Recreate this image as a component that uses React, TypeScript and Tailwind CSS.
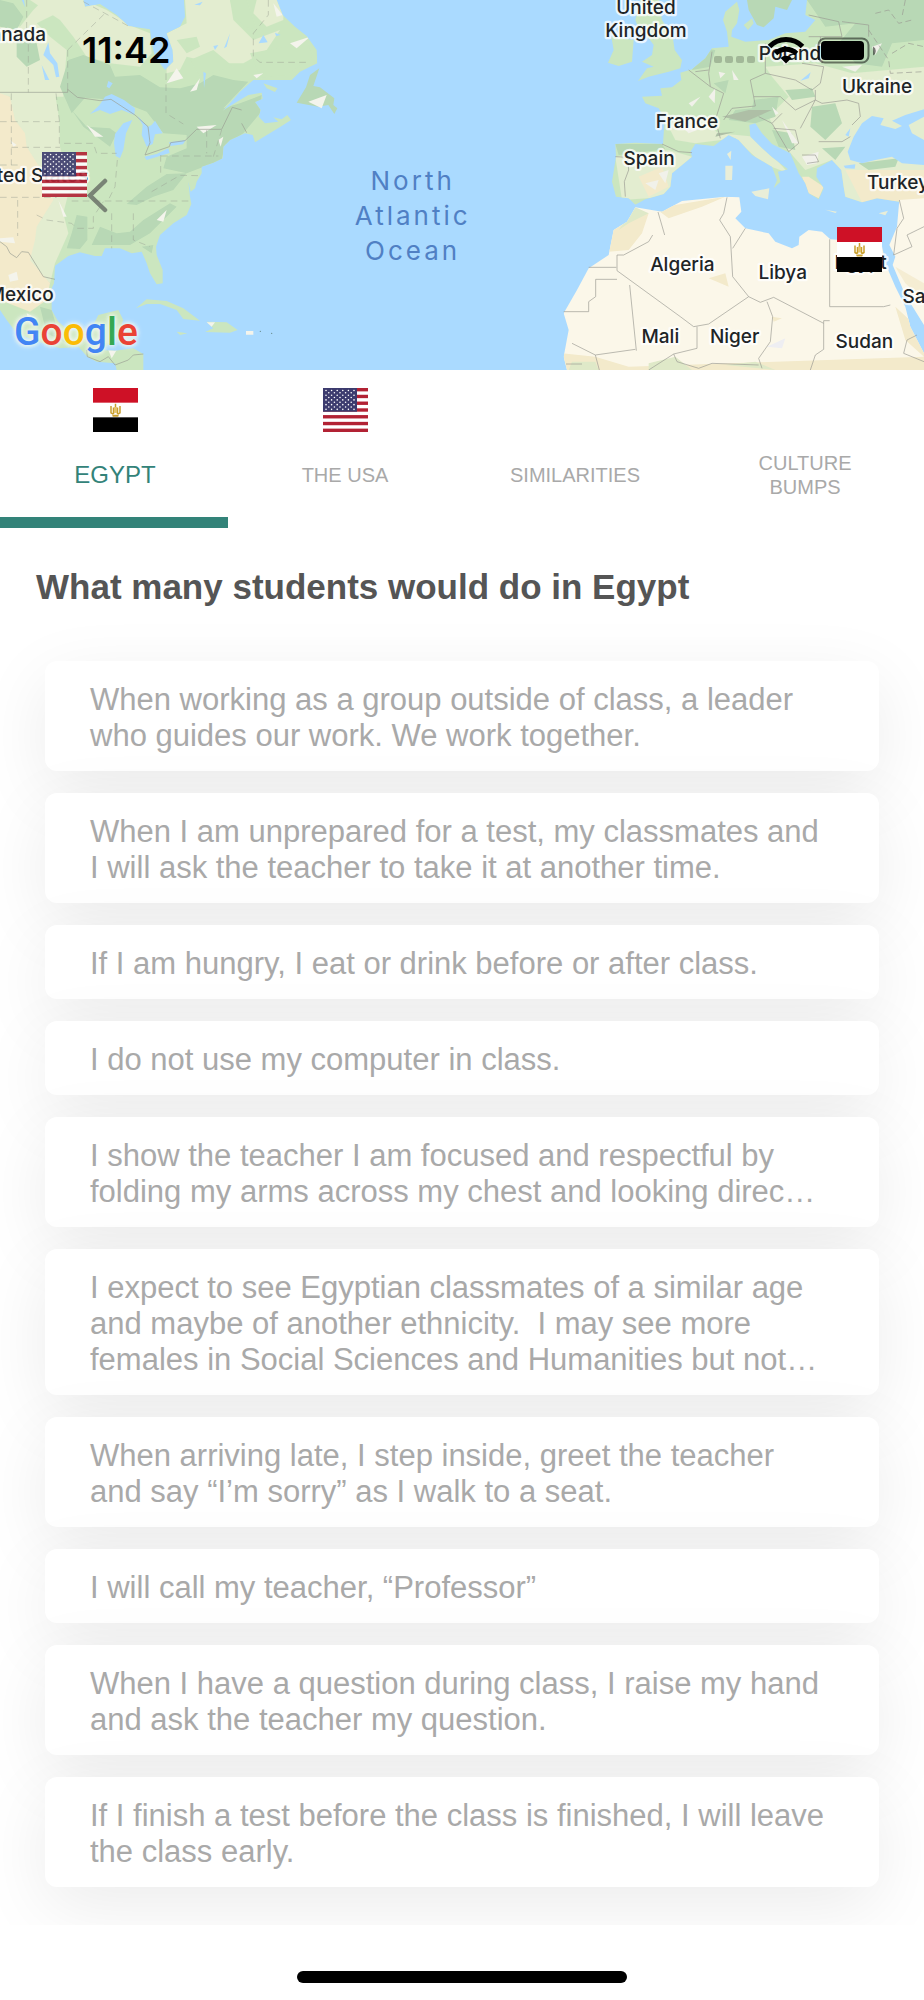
import { useState } from "react";

type TabId = "egypt" | "usa" | "similarities" | "bumps";

const answers: string[] = [
  "When working as a group outside of class, a leader who guides our work. We work together.",
  "When I am unprepared for a test, my classmates and I will ask the teacher to take it at another time.",
  "If I am hungry, I eat or drink before or after class.",
  "I do not use my computer in class.",
  "I show the teacher I am focused and respectful by folding my arms across my chest and looking direc…",
  "I expect to see Egyptian classmates of a similar age and maybe of another ethnicity.\u00a0 I may see more females in Social Sciences and Humanities but not…",
  "When arriving late, I step inside, greet the teacher and say “I’m sorry” as I walk to a seat.",
  "I will call my teacher, “Professor”",
  "When I have a question during class, I raise my hand and ask the teacher my question.",
  "If I finish a test before the class is finished, I will leave the class early.",
];

function EgyptFlag({ className }: { className: string }) {
  return (
    <svg viewBox="0 0 45 45" preserveAspectRatio="none" className={className} aria-hidden="true">
      <rect width="45" height="45" fill="#fff" />
      <rect width="45" height="15" fill="#ce1126" />
      <rect y="30" width="45" height="15" fill="#000" />
      <g fill="none" stroke="#c99f2e" strokeWidth="1.5">
        <path d="M18 18.5v7l2.5 1.5M27 18.5v7L24.500 27M20.500 20v6.500M24.500 20v6.500M22.500 16v4" />
      </g>
      <path d="M21 19.500h3v6h-3z" fill="#e3c46f" />
      <path d="M19 28.500c1-1.500 6-1.500 7 0l-1 1h-5z" fill="#c99f2e" />
    </svg>
  );
}

function UsaFlag({ className }: { className: string }) {
  const stripes = [0, 2, 4, 6, 8, 10, 12];
  const rows = [0, 1, 2, 3, 4, 5, 6, 7, 8];
  return (
    <svg viewBox="0 0 45 45.500" preserveAspectRatio="none" className={className} aria-hidden="true">
      <rect width="45" height="45.500" fill="#fff" />
      {stripes.map((s) => (
        <rect key={s} y={s * 3.5} width="45" height="3.5" fill="#b22234" />
      ))}
      <rect width="34" height="24.500" fill="#3c3b6e" />
      {rows.map((r) =>
        (r % 2 === 0 ? [0, 1, 2, 3, 4, 5] : [0, 1, 2, 3, 4]).map((c) => (
          <circle key={`${r}-${c}`} cx={3 + c * 5.6 + (r % 2 ? 2.8 : 0)} cy={2.5 + r * 2.45} r="0.8" fill="#fff" />
        )),
      )}
    </svg>
  );
}

const labels: { x: number; y: number; text: string }[] = [
  { x: 34, y: 123, text: "Canada" },
  { x: 82, y: 545, text: "United States" },
  { x: 62, y: 904, text: "Mexico" },
  { x: 1938, y: 42, text: "United" },
  { x: 1938, y: 110, text: "Kingdom" },
  { x: 2370, y: 180, text: "Poland" },
  { x: 2631, y: 278, text: "Ukraine" },
  { x: 2061, y: 383, text: "France" },
  { x: 1947, y: 495, text: "Spain" },
  { x: 2694, y: 566, text: "Turkey" },
  { x: 2047, y: 814, text: "Algeria" },
  { x: 2348, y: 838, text: "Libya" },
  { x: 2582, y: 808, text: "Egypt" },
  { x: 2784, y: 908, text: "Saudi" },
  { x: 1981, y: 1029, text: "Mali" },
  { x: 2204, y: 1029, text: "Niger" },
  { x: 2593, y: 1045, text: "Sudan" },
];

function WorldMap() {
  return (
    <svg viewBox="0 0 2772 1110" preserveAspectRatio="xMidYMid slice" className="block h-[370px] w-full bg-[#aadaff]" role="img" aria-label="Map of the North Atlantic">
      <defs>
        <clipPath id="america">
          <path d="M0 0H250L255 20 300 12 350 45 385 78 450 88 455 130 465 170 495 210 520 185 518 150 500 100 540 80 555 50 552 0H830L848 45 885 80 920 108 950 150 952 190 930 200 900 215 875 240H760L720 275 690 310 668 332 700 312 745 285 785 278 788 296 765 306 782 330 776 350 795 370 835 365 820 352 845 358 862 345 873 360 845 378 765 427 758 405 735 400 690 420 670 440 668 475 640 488 605 500 605 520 590 545 585 565 572 575 565 545 570 590 574 612 560 645 520 670 480 705 468 740 470 765 488 810 488 850 470 853 450 820 440 790 425 755 395 760 360 745 315 745 305 768 285 768 240 757 205 768 165 797 162 850 155 865 155 930 175 965 205 990 270 995 295 945 355 930 370 960 355 1000 330 1030 300 1050 345 1052 400 1045 430 1062 430 1110H350L345 1090 290 1085 262 1070 235 1040 180 1045 100 1020 50 1000 20 960 0 930Z" />
        </clipPath>
        <clipPath id="europe">
          <path d="M800 140 795 95 783 60 790 35 825 5 832 30 825 70 810 90 808 110 850 125 920 120 970 100 1030 95 1060 60 1030 45 1035 0H1386V600L1312 605 1245 595 1200 607 1150 590 1145 560 1138 510 1110 480 1065 505 1063 530 1085 565 1070 598 1040 580 1030 550 1010 520 985 460 930 432 900 400 880 370 862 375 865 410 900 445 930 472 978 508 948 515 955 545 935 565 945 540 930 500 870 465 830 420 800 405 755 438 700 432 685 455 690 470 630 520 625 560 605 582 550 598 520 614 500 595 462 590 450 545 462 470 460 432 520 428 603 432 608 355 590 325 550 310 540 290 600 287 595 265 630 262 658 240 655 218 690 208 730 175 750 145Z" />
        </clipPath>
        <clipPath id="africa">
          <path d="M1258 730 1105 718 1080 695 1040 690 1012 710 1010 735 990 745 940 725 920 700 850 685 820 655 838 635 832 592 790 590 660 603 600 635 520 622 495 665 455 690 440 765 380 805 345 870 305 940 320 990 305 1070 315 1110H1386V1060L1345 980 1330 920 1300 860 1272 795Z" />
        </clipPath>
        <filter id="soft" x="-5%" y="-5%" width="110%" height="110%">
          <feGaussianBlur stdDeviation="2" />
        </filter>
      </defs>

      <g clipPath="url(#america)">
        <rect width="1000" height="1110" fill="#cbe6bf" />
        <g filter="url(#soft)">
          <path d="M0 60 60 80 100 30 130 0H200L160 45 110 70 150 110 200 150 190 290H0ZM90 0H250L320 30 400 80 450 100 455 160 420 200 330 190 260 170 220 110 180 60ZM500 100 560 70 555 0H690L700 60 760 120 840 90 800 150 730 190 640 190 560 170 540 210 500 220ZM770 0H850V60L800 80 760 40Z" fill="#e3edd0" />
          <path d="M30 280H165L178 360 180 440 210 560 190 640 205 700 165 790 150 850 90 790 60 600Z" fill="#e3edd0" />
          <path d="M0 280 30 290 45 360 75 400 80 440 130 520 160 600 110 680 105 720 90 780 150 850 140 900 90 935 0 900Z" fill="#f3eacb" />
          <path d="M205 180 250 165 330 195 345 230 420 225 480 262 540 265 600 250 640 225 700 240 745 245 670 325 720 310 785 285 780 340 730 400 675 435 665 480 560 520 490 505 500 470 560 445 560 405 490 400 440 335 350 300 255 293 215 340 180 260ZM215 330 260 380 330 385 350 400 330 440 250 380Z" fill="#b8d8b5" />
          <path d="M380 612 440 560 500 522 560 520 520 570 460 590 410 615ZM200 745 215 700 230 645 262 650 262 720 240 747ZM275 735 300 680 350 700 390 695 430 660 510 610 530 620 450 700 390 735ZM425 740 460 735 455 760ZM120 920 155 930 175 1000 200 1030 140 1000ZM0 0 40 10 70 50 50 90 0 80ZM50 120 110 130 120 180 80 200 50 170Z" fill="#b8d8b5" />
          <path d="M690 0H740L770 90 730 80 700 40ZM530 120 590 110 600 140 560 160ZM750 160 850 140 920 120 940 170 860 225 780 235ZM570 180 640 150 700 200 600 230Z" fill="#cbe6bf" />
          <path d="M500 250 530 205 550 235ZM570 275 600 235 590 270ZM260 375 310 410 285 410ZM590 380 650 375 610 400ZM470 660 500 630 490 665ZM820 10 848 45 830 50ZM870 130 930 110 890 145ZM760 225 790 220 770 235ZM30 420 50 435 40 440ZM25 825 50 815 55 840 30 845ZM175 600 200 650 190 650ZM0 715 40 712 45 730 0 725ZM325 1050 350 1050 335 1075ZM80 940 110 955 85 965ZM655 420 670 410 662 440ZM60 90 80 115 70 120Z" fill="#f4f4ec" />
        </g>
        <g fill="#aadaff">
          <path d="M270 342 298 316 315 290 335 282 372 300 405 325 403 345 365 330 330 342 300 330Z" />
          <path d="M345 402 370 370 397 360 378 400 370 450 360 475 347 468 342 430Z" />
          <path d="M412 347 444 380 455 375 465 362 488 400 465 403 458 432 440 440 425 405 428 375Z" />
          <path d="M433 470 470 462 505 445 509 459 440 480ZM507 427 557 420 549 433 512 438Z" />
          <path d="M145 127 130 165 160 195 168 232 178 230 172 190 150 160ZM125 195 148 240 135 240ZM325 243 338 250 328 265 320 260ZM790 105 803 127 776 130ZM690 100 672 145 680 140ZM610 215 618 220 612 265ZM583 14 608 5 600 16ZM65 0 75 22 72 0ZM640 138 655 135 645 150ZM825 98 842 105 828 108Z" />
        </g>
      </g>
      <g fill="#cbe6bf">
        <path d="M958 205 940 258 960 262 1003 295 1000 315 1012 325 1003 342 985 315 955 320 890 308 918 262 930 225Z" fill="#b8d8b5" />
        <path d="M408 925 440 898 500 903 550 925 600 962 550 957 530 930 480 912 440 912ZM620 965 680 967 713 990 690 998 615 996 640 985ZM530 995 562 1000 540 1005ZM790 250 832 265 825 276 800 265Z" />
        <path d="M738 993H760V1004H738ZM620 967 645 967 635 980ZM925 305 980 285 965 325Z" fill="#f4f4ec" />
      </g>
      <g fill="none" stroke="#9a9f92" strokeWidth="2">
        <path d="M0 277H203V268L232 292 300 302 333 298 405 345 444 380 450 428 435 465 508 440 512 428 555 422 590 388H665L697 322 725 330M725 370 740 398M0 725 20 740 30 760 50 773 65 755 85 757 130 830 165 838M260 1050 262 1070 300 1085 325 1070 345 1095 385 1080 400 1065 430 1062" />
        <path d="M34 280V495M0 365H178M34 442H180M168 280 178 360V430H280L290 460H350M0 495H60M0 592H170M215 603H570M53 600V708M85 135V277M80 0V110L85 135M203 150V270M203 150 320 35M498 220V340L550 372M250 5 385 78M805 0V45L760 100V170L780 187H930M352 480 345 560 325 600M455 575 540 526 600 527M482 465V525M483 468H655M620 390V460M110 645 140 660 215 670 230 685H280V650L310 605M335 640V745M400 640V720L450 740M640 470 665 390" strokeDasharray="20 13" opacity=".7" />
      </g>
      <circle cx="781" cy="994" r="2" fill="#688" />
      <circle cx="815" cy="1000" r="2" fill="#688" />

      <g transform="translate(1386 0)">
        <g fill="#cbe6bf">
          <path d="M535 0H590L600 60 632 110 638 150 660 180 655 205 620 215 560 230 528 243 555 205 575 200 540 185 570 165 575 135 560 115 535 100 520 60Z" />
          <path d="M448 110 515 120 510 185 470 198 438 188 455 150ZM845 75 870 55 875 70 858 90Z" />
          <path d="M855 0H990L975 30 940 20 935 55 905 82 885 75 860 30Z" fill="#b8d8b5" />
        </g>
        <g clipPath="url(#europe)">
          <rect x="400" width="1000" height="640" fill="#cbe6bf" />
          <g filter="url(#soft)">
            <path d="M910 200 1060 190 1170 220 1386 200V620H1130L1110 480 1030 510 960 430 920 350 980 290 930 230ZM620 380 700 350 770 400 880 410 980 520 900 490 820 415 700 430 640 420ZM460 470 620 450 690 470 620 590 480 600Z" fill="#e3edd0" />
            <path d="M1035 0H1386V120L1290 130 1260 200 1180 190 1130 130 1180 70 1090 80ZM1050 320 1120 310 1140 370 1090 420 1045 380ZM875 300 950 290 940 350 880 370 800 360 820 330 870 325ZM930 390 990 400 1000 450 950 440ZM970 270 1050 265 1060 290 990 300ZM460 432 600 432 610 448 470 465ZM720 145 760 150 745 200 690 210ZM755 250 800 240 790 280ZM1080 445 1150 440 1120 480ZM1190 490 1310 475 1300 500 1220 510Z" fill="#b8d8b5" />
            <path d="M780 350 860 330 930 330 850 365ZM765 400 820 395 760 410Z" fill="#aebfa6" />
            <path d="M530 530 600 500 620 560 560 590ZM1150 510 1386 510V600L1200 607ZM1040 580 1070 595 1085 560 1040 530 1020 530Z" fill="#f3eacb" />
            <path d="M740 290 760 265 758 310ZM810 210 830 240 815 240ZM770 215 790 220 775 235ZM680 310 715 290 690 320ZM660 380 720 385 680 400ZM1020 470 1070 455 1065 490 1035 495ZM930 320 950 340 940 345ZM590 520 620 510 610 550ZM960 170 980 190 965 195ZM1140 200 1200 195 1180 215ZM1230 140 1260 130 1240 165ZM550 550 590 540 580 570ZM960 360 1010 430 990 430Z" fill="#f1f1ea" />
          </g>
        </g>
        <path d="M1157 455 1175 410 1200 370 1230 348 1265 355 1255 375 1300 387 1320 378 1290 362 1330 345 1386 328V350L1340 375 1350 400 1386 420V495L1320 490 1290 470 1240 480 1200 490 1165 480ZM1145 497 1180 493 1178 506 1150 505ZM1015 242 1046 217 1040 235ZM1150 405 1165 385 1160 410Z" fill="#aadaff" />
        <path d="M868 575 922 565 918 598 880 588ZM790 497 812 497 810 540 790 540ZM795 462 808 452 806 480ZM1090 629 1125 635 1120 639ZM1250 640 1278 632 1270 646Z" fill="#e9eed8" />
        <g clipPath="url(#africa)">
          <rect x="290" y="580" width="1100" height="540" fill="#fbf7e9" />
          <g filter="url(#soft)">
            <path d="M500 640 560 640 540 700 500 750 440 755 450 690ZM580 625 790 590 720 620 620 655ZM740 835 790 820 800 860ZM300 1060 400 1070 500 1100 1386 1070V1110H300ZM930 950 960 955 935 965ZM1300 920 1386 1000V1070L1330 1020Z" fill="#f3eacb" />
            <path d="M520 622 560 640 500 670 470 690ZM330 1085 400 1085 410 1110H320ZM560 1090 640 1070 690 1110H560ZM790 1095 880 1085 940 1110Z" fill="#dfe9c8" />
            <path d="M915 1040 970 1015 960 1045Z" fill="#eeeef2" />
          </g>
        </g>
        <path d="M1312 600 1386 595V975L1330 885 1292 795 1300 770 1282 735 1305 680Z" fill="#fbf7e9" />
        <path d="M1300 800 1386 850V900L1330 850Z" fill="#f5edd3" />
        <g fill="none" stroke="#9a9a92" strokeWidth="2">
          <path d="M588 636 608 705M795 592 785 640 773 660 805 710 812 830 860 890 895 907 935 892 1085 970M812 745 850 685M860 890 740 972 695 980 655 950 465 812V765L485 765 560 725 572 705M380 802H463M465 838H401V890L380 905V935H305M503 855 523 1052M1103 718V920H1265L1285 915M1103 962H1085V1048L1060 1065 1045 1110M915 905 932 950 925 1025 890 1075 900 1105M705 980V1045L635 1062 560 1110M710 1105 750 1090 890 1095M635 1062 645 1085 710 1105M330 1030 400 1065 520 1048M400 1065 412 1110M312 1092H360M1312 600 1325 655 1305 685 1295 765 1350 740 1335 705 1386 680M1335 1020 1325 1060 1386 1085M1335 1020 1365 1005" />
          <path d="M600 432 650 455 690 458M460 470 497 472 500 510 487 545 490 590M680 210 745 260 740 220 750 155M700 215 740 210M745 260 785 280 760 360 775 415M785 360 810 325 880 318 875 290 955 290 1000 330 1060 300 1060 270M865 240 910 220 1000 240 1050 270 1075 250 1085 200 1020 190M910 220V130M865 240 875 290M1040 110H1075M1040 45 1130 65 1140 110 1075 110 1080 190M1140 65 1220 75V110M1155 300 1190 310 1195 350 1170 375M1060 300 1080 310 1155 300M890 350 930 370 960 340M930 370 980 455 1010 430 1000 390 935 385M1060 300 1015 385M1020 465H1060L1070 485 1035 490M1070 425 1140 425 1165 410" />
          <path d="M1220 90 1280 180 1285 220 1386 215M1240 40 1280 30 1310 70 1350 60M1290 160 1340 130 1386 140M1330 0 1320 50" strokeDasharray="18 10" />
        </g>
      </g>

      <g fontFamily='Inter, Roboto, "Liberation Sans", sans-serif' textAnchor="middle">
        <g fontSize="57" fontWeight="500" fill="#202427" stroke="#fff" strokeOpacity=".75" strokeWidth="14" strokeLinejoin="round" paintOrder="stroke">
          {labels.map((l) => (
            <text key={l.text} x={l.x} y={l.y}>
              {l.text}
            </text>
          ))}
        </g>
        <g fontSize="78" letterSpacing="9" fill="#5080c4">
          <text x="1238" y="570">North</text>
          <text x="1238" y="675">Atlantic</text>
          <text x="1238" y="779">Ocean</text>
        </g>
      </g>
    </svg>
  );
}

function StatusIcons() {
  return (
    <svg viewBox="714 34 164 32" className="h-8 w-[164px]" aria-hidden="true">
      {[714, 725, 736, 747].map((x) => (
        <rect key={x} x={x} y="56" width="8" height="7" rx="2" fill="#000" opacity=".2" />
      ))}
      <g fill="none" stroke="#000" strokeWidth="5">
        <path d="M769.500 46.500a23 23 0 0 1 33 0" />
        <path d="M775.500 53.500a15 15 0 0 1 21 0" />
      </g>
      <path d="M780.500 58a8 8 0 0 1 11 0L786 63.500z" fill="#000" />
      <rect x="818.500" y="38.500" width="50" height="24" rx="6.500" fill="none" stroke="#000" strokeOpacity=".5" strokeWidth="2" />
      <rect x="821" y="41" width="43" height="19" rx="4" fill="#000" />
      <path d="M873 46.500a5 5 0 0 1 0 9z" fill="#000" opacity=".5" />
    </svg>
  );
}

const tabs: { id: TabId; label: string }[] = [
  { id: "egypt", label: "EGYPT" },
  { id: "usa", label: "THE USA" },
  { id: "similarities", label: "SIMILARITIES" },
  { id: "bumps", label: "CULTURE BUMPS" },
];

export default function App() {
  const [active, setActive] = useState<TabId>("egypt");

  return (
    <div className="flex min-h-screen flex-col bg-white font-['Liberation_Sans',Arial,sans-serif]">
      <header className="relative overflow-hidden">
        <WorldMap />
        <EgyptFlag className="absolute top-[227px] right-[42px] h-[45px] w-[45px]" />
        <UsaFlag className="absolute top-[152px] left-[42px] h-[45px] w-[45px] opacity-90" />
        <button type="button" aria-label="Back" className="absolute top-[178px] left-[86px]">
          <svg viewBox="0 0 22 36" className="h-9 w-[22px]" fill="none" stroke="#6b7268" strokeOpacity=".85" strokeWidth="4.500" strokeLinecap="round" strokeLinejoin="miter">
            <path d="M19 3 4 17.500 19 32" />
          </svg>
        </button>
        <div className="absolute bottom-[14px] left-[14px] flex font-['Roboto',sans-serif] text-[39px] leading-[48px] font-medium [text-shadow:0_0_4px_#eef7ee,0_0_4px_#eef7ee,0_0_6px_#eef7ee]">
          <span className="text-[#4285f4]">G</span>
          <span className="text-[#ea4335]">o</span>
          <span className="text-[#fbbc05]">o</span>
          <span className="text-[#4285f4]">g</span>
          <span className="text-[#34a853]">l</span>
          <span className="text-[#ea4335]">e</span>
        </div>
        <div className="absolute inset-x-0 top-[30px] flex items-center justify-between pr-[46px] pl-[82px]">
          <time className="font-['Inter',sans-serif] text-4xl leading-10 font-semibold text-black">11:42</time>
          <StatusIcons />
        </div>
      </header>

      <nav role="tablist" aria-label="Comparison" className="grid grid-cols-4 pr-1">
        {tabs.map((tab) => {
          const selected = tab.id === active;
          return (
            <button
              key={tab.id}
              type="button"
              role="tab"
              aria-selected={selected}
              onClick={() => setActive(tab.id)}
              className="flex flex-col items-center pt-[18px]"
            >
              <span className="h-11">
                {tab.id === "egypt" && <EgyptFlag className="h-11 w-[45px]" />}
                {tab.id === "usa" && <UsaFlag className="h-11 w-[45px]" />}
              </span>
              <span
                className={
                  selected
                    ? "flex h-[85px] items-center px-12 text-2xl text-[#338379]"
                    : "flex h-[85px] items-center px-12 text-xl leading-6 text-[#a9a9a9]"
                }
              >
                {tab.label}
              </span>
              <span className={selected ? "h-[11px] w-[99%] self-start bg-[#338379]" : "h-[11px] w-full"} />
            </button>
          );
        })}
      </nav>

      <main className="overflow-hidden pb-[38px]">
        <h1 className="px-9 pt-[35px] pb-[50px] text-[35px] leading-[48px] font-bold text-[#555]">What many students would do in Egypt</h1>
        <ul className="flex flex-col gap-[22px] px-[45px]">
          {answers.map((answer) => (
            <li
              key={answer}
              className="rounded-xl bg-white px-[45px] pt-[21px] pb-[17px] text-[31px] leading-9 text-[#a9a9a9] shadow-[0_20px_70px_rgba(0,0,0,0.08)]"
            >
              {answer}
            </li>
          ))}
        </ul>
      </main>

      <footer className="mt-auto flex justify-center pt-[46px] pb-[18px]">
        <div className="h-3 w-[330px] rounded-full bg-black" />
      </footer>
    </div>
  );
}
